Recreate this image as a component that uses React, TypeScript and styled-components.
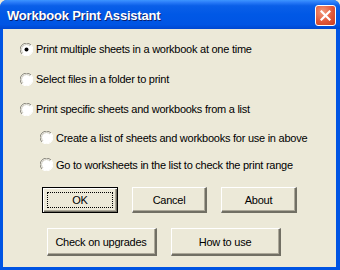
import styled, { createGlobalStyle } from 'styled-components';

const GlobalStyle = createGlobalStyle`
  html, body {
    margin: 0;
    padding: 0;
    background: #ece9d8;
  }
`;

const options = [
  { label: 'Print multiple sheets in a workbook at one time', checked: true, sub: false },
  { label: 'Select files in a folder to print', checked: false, sub: false },
  { label: 'Print specific sheets and workbooks from a list', checked: false, sub: false },
  { label: 'Create a list of sheets and workbooks for use in above', checked: false, sub: true },
  { label: 'Go to worksheets in the list to check the print range', checked: false, sub: true },
];

const Radio = ({ checked }: { checked: boolean }) => (
  <RadioBox width="13" height="13" viewBox="0 0 13 13">
    <circle cx="6.5" cy="6.5" r="6" fill="#fff" />
    <path d="M11 2 A6 6 0 0 0 2 11" fill="none" stroke="#8a887e" strokeWidth="1" />
    <path d="M10 3 A4.8 4.8 0 0 0 3 10" fill="none" stroke="#c9c6b8" strokeWidth="1" />
    <path d="M2 11 A6 6 0 0 0 11 2" fill="none" stroke="#fff" strokeWidth="1" />
    {checked && <circle cx="6.5" cy="6.5" r="2" fill="#000" />}
  </RadioBox>
);

const App = () => {
  return (
    <>
      <GlobalStyle />
      <Window>
        <TitleBar>
          <Title>Workbook Print Assistant</Title>
          <CloseButton>
            <svg width="11" height="11" viewBox="0 0 11 11">
              <path d="M1.5 1.5 L9.5 9.5 M9.5 1.5 L1.5 9.5" stroke="#fff" strokeWidth="2.2" strokeLinecap="square" />
            </svg>
          </CloseButton>
        </TitleBar>
        <Body>
          <OptionList>
            {options.map((o) => (
              <OptionRow key={o.label} sub={o.sub}>
                <Radio checked={o.checked} />
                <span>{o.label}</span>
              </OptionRow>
            ))}
          </OptionList>
          <ButtonRow top={9}>
            <Button width={76} height={26} primary>
              <Focus>OK</Focus>
            </Button>
            <Button width={75} height={26}>Cancel</Button>
            <Button width={76} height={26}>About</Button>
          </ButtonRow>
          <ButtonRow top={15} shift={-6}>
            <Button width={110} height={28}>Check on upgrades</Button>
            <Button width={110} height={28}>How to use</Button>
          </ButtonRow>
        </Body>
      </Window>
    </>
  );
};

const Window = styled.div`
  width: 340px;
  height: 270px;
  display: flex;
  flex-direction: column;
  box-sizing: border-box;
  background: #0054e3;
  border-radius: 7px 7px 0 0;
  overflow: hidden;
  font-family: 'Liberation Sans', Arial, sans-serif;
`;

const TitleBar = styled.div`
  height: 29px;
  flex: none;
  display: flex;
  align-items: center;
  justify-content: space-between;
  padding: 0 4px 0 7px;
  background: linear-gradient(
    to bottom,
    #3d95ff 0%,
    #2a7cf8 8%,
    #0a5fe8 20%,
    #0058e6 50%,
    #0055e4 85%,
    #0047d0 100%
  );
`;

const Title = styled.div`
  color: #fff;
  font-weight: bold;
  font-size: 13px;
  letter-spacing: -0.2px;
  text-shadow: 1px 1px 0 #0a1f6e;
  padding-top: 1px;
`;

const CloseButton = styled.div`
  width: 19px;
  height: 19px;
  margin-top: 1px;
  border: 1px solid #fff;
  border-radius: 3px;
  display: flex;
  align-items: center;
  justify-content: center;
  background: radial-gradient(circle at 35% 30%, #f29a7b 0%, #e2583a 55%, #c83c1e 100%);
`;

const Body = styled.div`
  flex: 1;
  margin: 0 4px 3px 3px;
  background: #ece9d8;
  display: flex;
  flex-direction: column;
  font-size: 11px;
  letter-spacing: -0.25px;
  color: #000;
`;

const OptionList = styled.div`
  display: flex;
  flex-direction: column;
  padding-top: 5px;
`;

const OptionRow = styled.label<{ sub: boolean }>`
  display: flex;
  align-items: center;
  gap: 3px;
  height: ${(p) => (p.sub ? 27 : 30)}px;
  padding-left: ${(p) => (p.sub ? 37 : 17)}px;
  white-space: nowrap;
`;

const RadioBox = styled.svg`
  flex: none;
  display: block;
`;

const ButtonRow = styled.div<{ top: number; shift?: number }>`
  display: flex;
  justify-content: center;
  gap: 14px;
  margin-top: ${(p) => p.top}px;
  transform: translateX(${(p) => p.shift ?? 0}px);
`;

const Button = styled.div<{ width: number; height: number; primary?: boolean }>`
  box-sizing: border-box;
  width: ${(p) => p.width}px;
  height: ${(p) => p.height}px;
  display: flex;
  align-items: center;
  justify-content: center;
  background: #ece9d8;
  border-style: solid;
  border-width: ${(p) => (p.primary ? '1px' : '1px 2px 2px 1px')};
  border-color: ${(p) => (p.primary ? '#000' : '#fff #716f64 #716f64 #fff')};
  box-shadow: ${(p) =>
    p.primary
      ? 'inset 1px 1px 0 #fff, inset -1px -1px 0 #716f64, inset -2px -2px 0 #aca899'
      : 'inset -1px -1px 0 #aca899'};
  font-size: 11px;
`;

const Focus = styled.div`
  width: calc(100% - 8px);
  height: calc(100% - 8px);
  border: 1px dotted #000;
  display: flex;
  align-items: center;
  justify-content: center;
  box-sizing: border-box;
`;

export default App;
